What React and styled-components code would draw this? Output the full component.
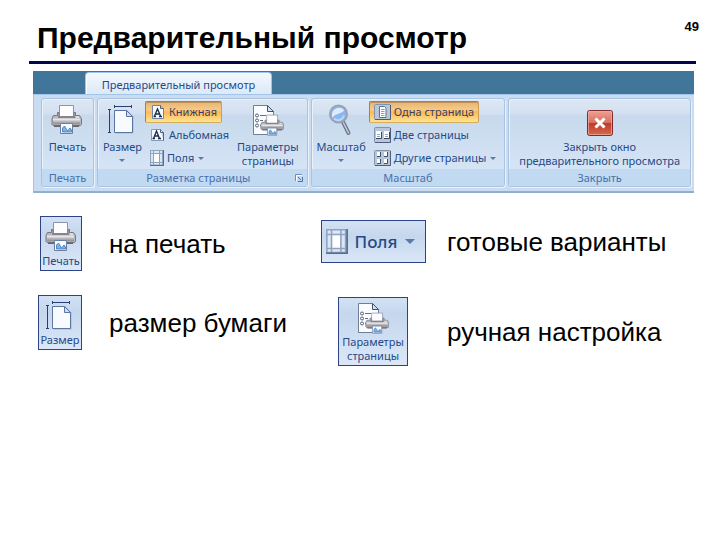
import React from "react";
import styled, { createGlobalStyle, css } from "styled-components";

const GlobalStyle = createGlobalStyle`
  * {
    box-sizing: border-box;
  }
  body {
    margin: 0;
    background: #fff;
    color: #000;
    font-family: "Liberation Sans", Arial, sans-serif;
  }
  button {
    margin: 0;
    padding: 0;
    border: 0;
    background: none;
    color: inherit;
    font: inherit;
    cursor: pointer;
  }
  svg {
    display: block;
    flex: none;
  }
`;

const Header = styled.header`
  display: flex;
  justify-content: space-between;
  align-items: flex-start;
  margin: 0 24px 0 29px;
  padding: 20px 0 5px 8px;
  border-bottom: 3px solid #05054f;
`;

const Title = styled.h1`
  margin: 0;
  font-size: 30px;
  line-height: 36px;
  white-space: nowrap;
`;

const PageNumber = styled.span`
  margin-right: -3px;
  font-size: 13px;
  line-height: 14px;
  font-weight: bold;
`;

const Ribbon = styled.section`
  margin: 7px 26px 0 33px;
  background: #41759a;
  color: #264a86;
  font-family: "Noto Sans", "Open Sans", sans-serif;
  font-size: 11px;
  line-height: 14px;
`;

const TabStrip = styled.div`
  display: flex;
  padding: 1px 0 0 52px;
`;

const Tab = styled.button`
  width: 187px;
  height: 22px;
  padding-top: 3px;
  border: 1px solid #9cc4ee;
  border-bottom: 0;
  border-radius: 4px 4px 0 0;
  background: linear-gradient(#f3f8fe, #dce9f8);
  box-shadow: inset 1px 1px 0 #fff;
  white-space: nowrap;
`;

const Groups = styled.div`
  display: grid;
  grid-template-columns: 53fr 211fr 195fr 183fr;
  gap: 3px;
  padding: 3px 3px 4px 7px;
  border: solid #a4c4e8;
  border-width: 1px 0 2px 1px;
  border-bottom-color: #8fb0cf;
  background: #c9dcf2;
`;

const Group = styled.div`
  display: flex;
  flex-direction: column;
  min-width: 0;
  border: 1px solid #a9c3e1;
  border-radius: 3px;
  background: linear-gradient(#dde7f4, #d3e0f0 15px, #c8d9ed 16px, #d9e8f8);
  box-shadow: inset 1px 1px 0 #e9f1fa, 1px 1px 0 #eaf2fb;
  overflow: hidden;
`;

const GroupBody = styled.div`
  display: flex;
  justify-content: ${props => props.$align || "flex-start"};
  height: 70px;
  padding: 2px 5px 0;
`;

const GroupLabel = styled.div`
  display: flex;
  align-items: center;
  height: 17px;
  padding: 0 4px;
  background: #c1d9f1;
  color: #4770ac;
  font-size: 11px;

  span {
    flex: 1;
    text-align: center;
    white-space: nowrap;
  }
`;

const BigButton = styled.button`
  display: flex;
  flex-direction: column;
  align-items: center;
  justify-content: flex-start;
  padding-top: ${props => props.$top || "3px"};
  white-space: nowrap;

  span {
    margin-top: 4px;
  }
`;

const Arrow = styled.i`
  border: solid transparent;
  border-width: 3px 3px 0;
  border-top-color: #5b7ba6;
  margin: 5px 0 0;
`;

const SmallColumn = styled.div`
  display: flex;
  flex-direction: column;
  align-items: flex-start;
  gap: 1px;
  width: ${props => props.$width};
  margin-left: 3px;
`;

const SmallButton = styled.button`
  display: flex;
  align-items: center;
  gap: 3px;
  height: 22px;
  padding: 0 4px;
  border: 1px solid transparent;
  border-radius: 2px;
  white-space: nowrap;

  ${Arrow} {
    margin: 0 0 0 1px;
  }

  ${props =>
    props.$active &&
    css`
      border-color: #a48344 #c9a154 #d5ad5b #a48344;
      background: linear-gradient(#e3b377, #fbcb83 8px, #fdb955 10px, #fde492);
      box-shadow: inset 0 1px 0 #bf9259;
      color: #3b3f63;
    `}
`;

const Examples = styled.main`
  display: grid;
  grid-template-columns: 281fr 401fr;
  align-items: start;
  padding: 23px 0 0 38px;
`;

const ExampleList = styled.div`
  display: grid;
  grid-template-columns: ${props => props.$thumb} 1fr;
  align-items: center;
  justify-items: start;
  gap: ${props => props.$gap};
  padding-top: ${props => props.$top || 0};
`;

const Thumb = styled.button`
  display: flex;
  flex-direction: column;
  align-items: center;
  justify-self: ${props => props.$side || "center"};
  width: ${props => props.$width};
  padding: 4px 0 2px;
  border: 1px solid #2c4486;
  background: linear-gradient(#d3e1f3, #c5d7ee 16px, #dbe7f7);
  color: #264a86;
  font-family: "Noto Sans", "Open Sans", sans-serif;
  font-size: 11px;
  line-height: 14px;
  white-space: nowrap;

  span {
    margin-top: 1px;
  }
`;

const WideThumb = styled(Thumb)`
  flex-direction: row;
  justify-content: space-between;
  padding: 8px 10px 8px 4px;
  font-size: 17px;
  line-height: 24px;
  font-weight: 500;

  ${Arrow} {
    border-width: 5px 5px 0;
    margin: 0;
  }
`;

const Caption = styled.p`
  margin: 0;
  font-size: 26px;
  line-height: 30px;
  white-space: nowrap;
`;

const PrinterShape = () => (
  <>
    <path d="M8.5 1.5h14v12h-14z" fill="#fdfdfe" stroke="#8795ad" />
    <path d="M2.500 11.500h4v-3H8v5h15v-5h1.500v3h4l2 3v6l-1 1H2l-1-1v-6z" fill="#b9b9bd" stroke="#77777f" />
    <path d="M2 15.5h27" stroke="#e6e6e8" strokeWidth="2" />
    <path d="M2 19.5h27" stroke="#96969c" strokeWidth="2" />
    <path d="M7 12h17v2H7z" fill="#85858b" />
    <path d="M25 12h3v2h-3z" fill="#dddde0" />
    <path d="M3 21.5h25v1.500H3z" fill="#66666e" />
    <path d="M9.5 19.5h12v10h-12z" fill="#f8fbff" stroke="#6d7fa0" />
    <path d="M11.5 24l2-2 3 5 2.5-3 1.5 2v2h-9z" fill="#7fb3e2" stroke="#3a74b8" strokeWidth=".8" />
  </>
);

const PrinterIcon = () => (
  <svg width="32" height="32" viewBox="0 0 32 32">
    <PrinterShape />
  </svg>
);

const SizeIcon = () => (
  <svg width="32" height="32" viewBox="0 0 32 32">
    <path d="M8 2.5h18M8.5 1v3M25.5 1v3M3.5 5v24M2 5.5h3M2 28.5h3" fill="none" stroke="#26406f" />
    <path d="M9.500 29.500h18v-17l-6-6h-12z" fill="#8295b7" opacity=".5" />
    <path d="M8.500 6.500h12l6 6v16h-18z" fill="#f7faff" stroke="#5b74a1" />
    <path d="M20.500 6.500v6h6z" fill="#c9dbf5" stroke="#5b74a1" />
  </svg>
);

const ParamsIcon = () => (
  <svg width="32" height="32" viewBox="0 0 32 32">
    <path d="M1.500 1.500h14l6 6v23h-20z" fill="#fafcff" stroke="#6f7e99" />
    <path d="M15.500 1.500v6h6z" fill="#d3e0f2" stroke="#43546f" />
    <path d="M8 11.500h6M8 16.500h3M8 21.500h2" stroke="#6c6c78" />
    <g fill="#fff" stroke="#555f75">
      <circle cx="5" cy="11.500" r="1.500" />
      <circle cx="5" cy="16.500" r="1.500" />
      <circle cx="5" cy="21.500" r="1.500" />
    </g>
    <g transform="translate(8 10) scale(.78 .72)">
      <PrinterShape />
    </g>
  </svg>
);

const ZoomIcon = () => (
  <svg width="32" height="32" viewBox="0 0 32 32">
    <path d="M18 18l5.500 11" stroke="#6e788a" strokeWidth="4" strokeLinecap="round" />
    <path d="M18.500 19l5 10" stroke="#c5ccd8" strokeWidth="1.500" strokeLinecap="round" />
    <circle cx="13.500" cy="10" r="8.500" fill="#8db7ec" stroke="#9aa3b3" strokeWidth="2" />
    <path d="M7 10a7 7 0 0 1 12-4c-1 4-7 2-12 8z" fill="#dcebfd" />
    <path d="M9 14.500c4 3 8 2 10-3" fill="none" stroke="#b7d8ff" strokeWidth="2" />
  </svg>
);

const CloseIcon = () => (
  <svg width="26" height="26" viewBox="0 0 26 26">
    <defs>
      <linearGradient id="close" x1="0" y1="0" x2="0" y2="1">
        <stop offset="0" stopColor="#eda394" />
        <stop offset=".49" stopColor="#d8705f" />
        <stop offset=".5" stopColor="#bd3a28" />
        <stop offset="1" stopColor="#d9694f" />
      </linearGradient>
    </defs>
    <rect x=".5" y=".5" width="25" height="25" rx="2" fill="url(#close)" stroke="#7c2a2c" />
    <rect x="1.500" y="1.500" width="23" height="23" rx="1" fill="none" stroke="#eeb0a2" opacity=".7" />
    <path d="M8.500 8.500l9 9M17.500 8.500l-9 9" stroke="#fff" strokeWidth="3" />
  </svg>
);

const PortraitIcon = () => (
  <svg width="16" height="16" viewBox="0 0 16 16">
    <path d="M2.500 1.500h8l3 3v10h-11z" fill="#f6f9fe" stroke="#7184a5" />
    <path d="M10.500 1.500v3h3" fill="#b9cce8" stroke="#4f6388" />
    <path d="M4.500 12L7.500 5l3 7M5.500 10h4M3.500 12.500h2.500M9 12.500h3" fill="none" stroke="#1d2c49" strokeWidth="1.300" />
  </svg>
);

const LandscapeIcon = () => (
  <svg width="16" height="16" viewBox="0 0 16 16">
    <path d="M1.500 2.500h9l3 3v8h-12z" fill="#f6f9fe" stroke="#8a9bb8" />
    <path d="M10.500 2.500v3h3v8" fill="#b9cce8" stroke="#4f6388" />
    <path d="M3.500 11.500L6.500 4l3 7.500M4.500 9h4M2.500 11.500h2.500M8 11.500h3" fill="none" stroke="#1d2c49" strokeWidth="1.300" />
  </svg>
);

const MarginsIcon = ({ width = 14, height = 16 }) => (
  <svg width={width} height={height} viewBox="0 0 14 16">
    <path d="M0 0h14v16H0z" fill="#8fa3bf" />
    <path d="M13.500 0v15.500H0" fill="none" stroke="#566d90" />
    <path d="M1 1h2v2H1zM4 1h5v2H4zM10 1h2v2h-2zM1 4h2v8H1zM10 4h2v8h-2zM1 13h2v1.500H1zM4 13h5v1.500H4zM10 13h2v1.500h-2z" fill="#dbe7f6" />
    <path d="M4 4h5v8H4z" fill="#fff" />
  </svg>
);

// frame shared by the three page count icons
const PagesIcon = ({ children }) => (
  <svg width="17" height="16" viewBox="0 0 17 16">
    <rect x=".5" y=".5" width="16" height="15" rx="1" fill="#b9c6da" stroke="#8594ad" />
    <path d="M16.500 1v14.500H1" fill="none" stroke="#4f5d78" />
    {children}
  </svg>
);

const OnePageIcon = () => (
  <PagesIcon>
    <path d="M5.500 2.500h5l1.500 1.500v9.500H5.500z" fill="#fff" stroke="#5d7395" />
    <path d="M7 5.500h3.500M7 7.500h3.500M7 9.500h3.500M7 11.500h3.500" stroke="#86a1c8" />
  </PagesIcon>
);

const TwoPagesIcon = () => (
  <PagesIcon>
    <path d="M2 4h5v7H2zM10 4h5v7h-5z" fill="#fff" />
    <path d="M2 11.500h5.500V5M10 11.500h5.500V5" fill="none" stroke="#33445f" />
    <path d="M3 7.500h3M3 9.500h3M11 7.500h3M11 9.500h3" stroke="#8ba5c9" />
  </PagesIcon>
);

const ManyPagesIcon = () => (
  <PagesIcon>
    <path d="M3 2h3v4H3zM10 2h3v4h-3zM3 9h3v4H3zM10 9h3v4h-3z" fill="#fff" />
    <path d="M3 6.500h3.500V2M10 6.500h3.500V2M3 13.500h3.500V9M10 13.500h3.500V9" fill="none" stroke="#3f5170" />
  </PagesIcon>
);

const LauncherIcon = () => (
  <svg width="8" height="8" viewBox="0 0 8 8">
    <path d="M.5 7V.5H7" fill="none" stroke="#6d8dbb" />
    <path d="M3 3l3 3M7.500 3v4.500H3" fill="none" stroke="#4f72a8" />
    <path d="M1.500 7V1.500H7" fill="none" stroke="#fff" />
  </svg>
);

const App = () => {
  return (
    <>
      <GlobalStyle />
      <Header>
        <Title>Предварительный просмотр</Title>
        <PageNumber>49</PageNumber>
      </Header>

      <Ribbon>
        <TabStrip>
          <Tab>Предварительный просмотр</Tab>
        </TabStrip>
        <Groups>
          <Group>
            <GroupBody $align="center">
              <BigButton>
                <PrinterIcon />
                <span>Печать</span>
              </BigButton>
            </GroupBody>
            <GroupLabel>
              <span>Печать</span>
            </GroupLabel>
          </Group>

          <Group>
            <GroupBody>
              <BigButton>
                <SizeIcon />
                <span>Размер</span>
                <Arrow />
              </BigButton>
              <SmallColumn $width="92px">
                <SmallButton $active>
                  <PortraitIcon />
                  Книжная
                </SmallButton>
                <SmallButton>
                  <LandscapeIcon />
                  Альбомная
                </SmallButton>
                <SmallButton>
                  <MarginsIcon />
                  Поля
                  <Arrow />
                </SmallButton>
              </SmallColumn>
              <BigButton>
                <ParamsIcon />
                <span>
                  Параметры
                  <br />
                  страницы
                </span>
              </BigButton>
            </GroupBody>
            <GroupLabel>
              <span>Разметка страницы</span>
              <LauncherIcon />
            </GroupLabel>
          </Group>

          <Group>
            <GroupBody>
              <BigButton>
                <ZoomIcon />
                <span>Масштаб</span>
                <Arrow />
              </BigButton>
              <SmallColumn>
                <SmallButton $active>
                  <OnePageIcon />
                  Одна страница
                </SmallButton>
                <SmallButton>
                  <TwoPagesIcon />
                  Две страницы
                </SmallButton>
                <SmallButton>
                  <ManyPagesIcon />
                  Другие страницы
                  <Arrow />
                </SmallButton>
              </SmallColumn>
            </GroupBody>
            <GroupLabel>
              <span>Масштаб</span>
            </GroupLabel>
          </Group>

          <Group>
            <GroupBody $align="center">
              <BigButton $top="9px">
                <CloseIcon />
                <span>
                  Закрыть окно
                  <br />
                  предварительного просмотра
                </span>
              </BigButton>
            </GroupBody>
            <GroupLabel>
              <span>Закрыть</span>
            </GroupLabel>
          </Group>
        </Groups>
      </Ribbon>

      <Examples>
        <ExampleList $thumb="44px" $gap="24px 27px">
          <Thumb $width="42px" $side="end">
            <PrinterIcon />
            <span>Печать</span>
          </Thumb>
          <Caption>на печать</Caption>
          <Thumb $width="44px" $side="end">
            <SizeIcon />
            <span>Размер</span>
          </Thumb>
          <Caption>размер бумаги</Caption>
        </ExampleList>
        <ExampleList $thumb="108px" $gap="34px 20px" $top="4px">
          <WideThumb $width="105px">
            <MarginsIcon width={22} height={25} />
            Поля
            <Arrow />
          </WideThumb>
          <Caption>готовые варианты</Caption>
          <Thumb $width="70px">
            <ParamsIcon />
            <span>
              Параметры
              <br />
              страницы
            </span>
          </Thumb>
          <Caption>ручная настройка</Caption>
        </ExampleList>
      </Examples>
    </>
  );
};

export default App;
